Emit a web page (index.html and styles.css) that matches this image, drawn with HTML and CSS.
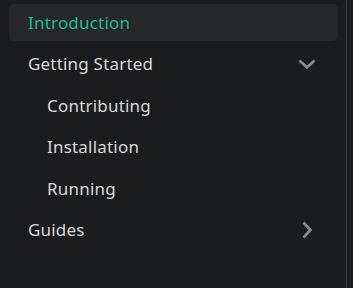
FILE: index.html
```html
<!DOCTYPE html>
<html lang="en">
<head>
  <meta charset="UTF-8">
  <meta name="viewport" content="width=device-width, initial-scale=1.0">
  <title>Docs</title>
  <link rel="stylesheet" href="styles.css">
</head>
<body>
  <nav class="sidebar">
    <ul class="menu">
      <li class="item active"><a href="#">Introduction</a></li>
      <li class="group open">
        <div class="item">
          <a href="#">Getting Started</a>
          <svg class="chev" viewBox="0 0 20 20"><path d="M2.5 6.5l7.5 7 7.5-7"/></svg>
        </div>
        <ul class="sub">
          <li class="item"><a href="#">Contributing</a></li>
          <li class="item"><a href="#">Installation</a></li>
          <li class="item"><a href="#">Running</a></li>
        </ul>
      </li>
      <li class="group">
        <div class="item">
          <a href="#">Guides</a>
          <svg class="chev" viewBox="0 0 20 20"><path d="M6.5 2.5l7 7.5-7 7.5"/></svg>
        </div>
      </li>
    </ul>
  </nav>
</body>
</html>
```
FILE: styles.css
```css
*{ padding: 0; margin: 0; box-sizing: border-box; }
a{ text-decoration: none; color: inherit; }
li{ list-style-type: none; }
html, body{ height: 100%; }
body{ background: #1b1c1e; font-family: "Noto Sans", "Open Sans", sans-serif; font-size: 17px; letter-spacing: 0.2px; color: #d8d8d8; }
.sidebar{ width: 347px; height: 100%; border-right: 1px solid #3b4048; padding: 4px 8px 0 9px; }
.item{ display: flex; align-items: center; justify-content: space-between; height: 37px; padding: 0 21px 0 19px; border-radius: 5px; margin-bottom: 4.5px; }
.item a{ margin-top: -1px; }
.item.active{ background: #262729; color: #22b98f; }
.sub .item{ padding-left: 38px; }
.chev{ width: 20px; height: 20px; fill: none; stroke: #8c8c8c; stroke-width: 2.6; }
```
